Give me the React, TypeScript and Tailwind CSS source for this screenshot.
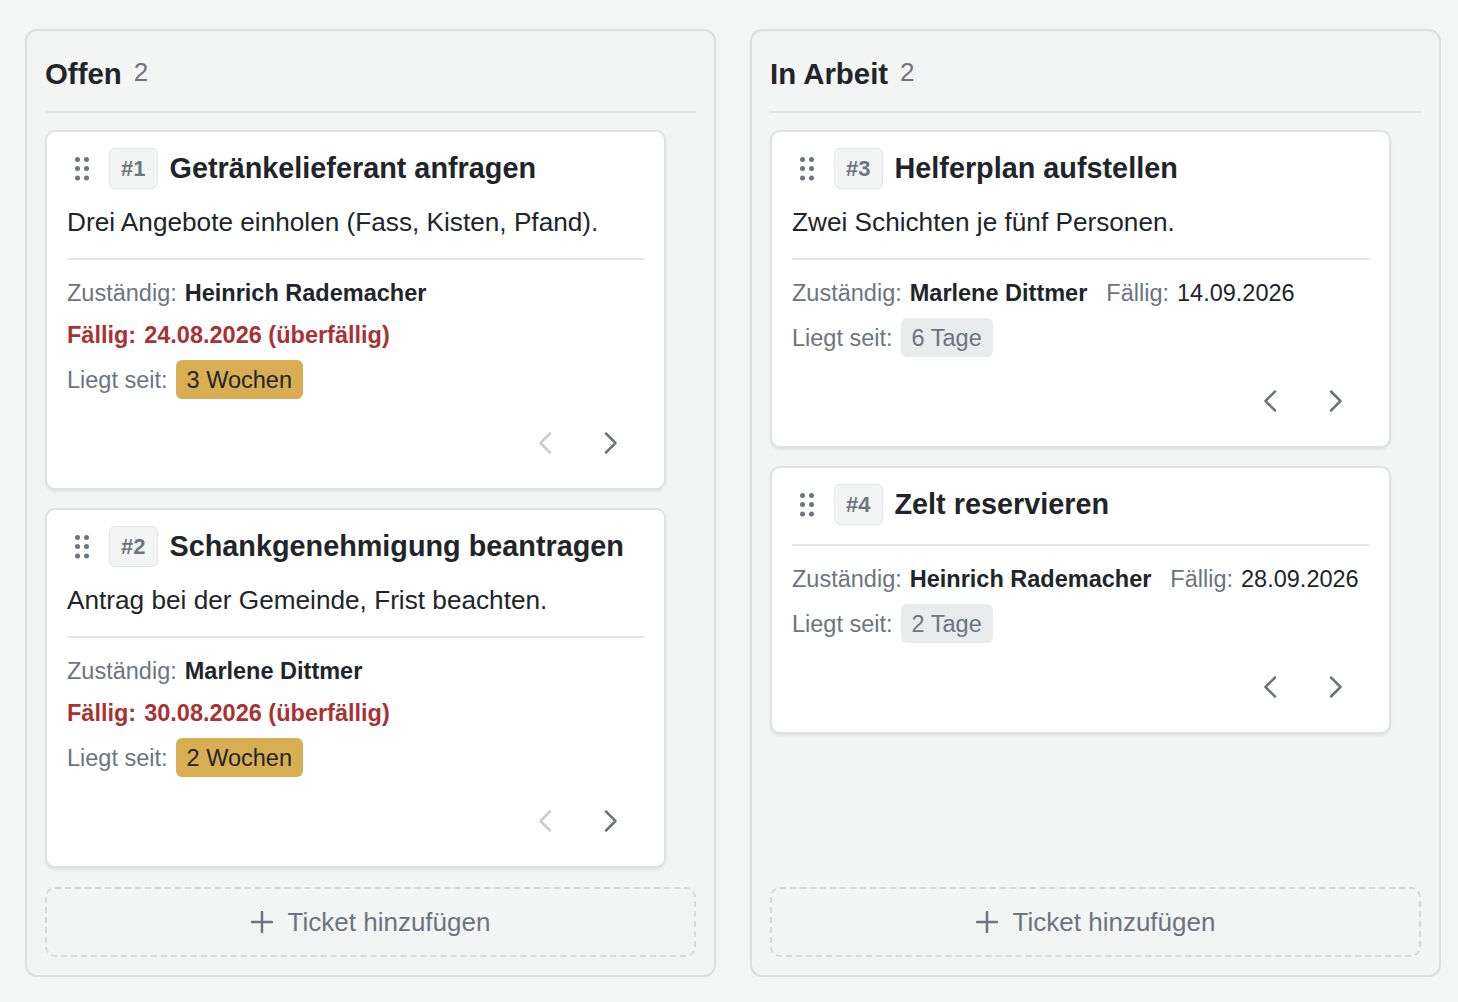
import React from "react";

type Ticket = {
  id: number;
  title: string;
  desc?: string;
  owner: string;
  due: string;
  overdue?: boolean;
  since: string;
  sinceWarn?: boolean;
  inline?: boolean;
  prevDisabled?: boolean;
};

const cols: { name: string; tickets: Ticket[] }[] = [
  {
    name: "Offen",
    tickets: [
      {
        id: 1,
        title: "Getränkelieferant anfragen",
        desc: "Drei Angebote einholen (Fass, Kisten, Pfand).",
        owner: "Heinrich Rademacher",
        due: "24.08.2026",
        overdue: true,
        since: "3 Wochen",
        sinceWarn: true,
        prevDisabled: true,
      },
      {
        id: 2,
        title: "Schankgenehmigung beantragen",
        desc: "Antrag bei der Gemeinde, Frist beachten.",
        owner: "Marlene Dittmer",
        due: "30.08.2026",
        overdue: true,
        since: "2 Wochen",
        sinceWarn: true,
        prevDisabled: true,
      },
    ],
  },
  {
    name: "In Arbeit",
    tickets: [
      {
        id: 3,
        title: "Helferplan aufstellen",
        desc: "Zwei Schichten je fünf Personen.",
        owner: "Marlene Dittmer",
        due: "14.09.2026",
        since: "6 Tage",
        inline: true,
      },
      {
        id: 4,
        title: "Zelt reservieren",
        owner: "Heinrich Rademacher",
        due: "28.09.2026",
        since: "2 Tage",
        inline: true,
      },
    ],
  },
];

function Grip() {
  return (
    <svg width="14" height="24" viewBox="0 0 14 24" fill="#6c757d">
      <circle cx="2.5" cy="2.6" r="2.5" />
      <circle cx="11.5" cy="2.6" r="2.5" />
      <circle cx="2.5" cy="11.6" r="2.5" />
      <circle cx="11.5" cy="11.6" r="2.5" />
      <circle cx="2.5" cy="21" r="2.5" />
      <circle cx="11.5" cy="21" r="2.5" />
    </svg>
  );
}

function Chevron({ dir, color }: { dir: "l" | "r"; color: string }) {
  return (
    <svg width="16" height="24" viewBox="0 0 16 24" fill="none" stroke={color} strokeWidth="2.5" strokeLinecap="round" strokeLinejoin="round">
      {dir === "r" ? <path d="M3 2.5l9.5 9.5-9.5 9.5" /> : <path d="M13 2.5l-9.5 9.5 9.5 9.5" />}
    </svg>
  );
}

function Plus() {
  return (
    <svg width="22" height="22" viewBox="0 0 22 22" fill="none" stroke="#6c757d" strokeWidth="2.5" strokeLinecap="round">
      <path d="M11 1v20M1 11h20" />
    </svg>
  );
}

function Card({ t }: { t: Ticket }) {
  return (
    <div className="bg-white border-2 border-[#dfe2e2] rounded-[10px] shadow-[0_2px_3px_rgba(0,0,0,0.07)] px-[20px] pt-[16px] pb-[21px]">
      <div className="flex items-center gap-[12px]">
        <div className="px-[8px] flex items-center">
          <Grip />
        </div>
        <div className="h-[41px] px-[11px] flex items-center rounded-[6px] bg-[#f3f4f4] border-[1.5px] border-[#e2e5e5] text-[22px] font-bold text-[#6c757d]">
          #{t.id}
        </div>
        <div className="text-[28.8px] font-bold text-[#212529] leading-[41px]">{t.title}</div>
      </div>
      {t.desc && (
        <div className="mt-[14px] text-[26.2px] leading-[39px] text-[#212529]">{t.desc}</div>
      )}
      <div
        className={
          (t.desc ? "mt-[16px] " : "mt-[19px] ") +
          "border-t-2 border-[#e4e6e6] pt-[16px] flex flex-col gap-[8px] text-[23.5px] leading-[34px]"
        }
      >
        {t.inline ? (
          <div className="flex items-center">
            <span className="text-[#6c757d]">Zuständig:</span>
            <span className="ml-[8px] font-bold text-[#212529]">{t.owner}</span>
            <span className="ml-[19px] text-[#6c757d]">Fällig:</span>
            <span className="ml-[8px] text-[#212529]">{t.due}</span>
          </div>
        ) : (
          <>
            <div className="flex items-center">
              <span className="text-[#6c757d]">Zuständig:</span>
              <span className="ml-[8px] font-bold text-[#212529]">{t.owner}</span>
            </div>
            <div className="flex items-center font-bold text-[#a83232]">
              <span>Fällig:</span>
              <span className="ml-[8px]">{t.due} (überfällig)</span>
            </div>
          </>
        )}
        <div className="flex items-center">
          <span className="text-[#6c757d]">Liegt seit:</span>
          <span
            className={
              t.sinceWarn
                ? "ml-[8px] h-[39px] px-[11px] flex items-center rounded-[6px] bg-[#d9ae52] text-[#212529]"
                : "ml-[8px] h-[39px] px-[11px] flex items-center rounded-[6px] bg-[#e9ecec] text-[#6c757d]"
            }
          >
            {t.since}
          </span>
        </div>
      </div>
      <div className="mt-[20px] flex justify-end">
        <button className="w-[66px] h-[48px] flex items-center justify-center">
          <Chevron dir="l" color={t.prevDisabled ? "#c9cdcd" : "#6c757d"} />
        </button>
        <button className="w-[66px] h-[48px] flex items-center justify-center">
          <Chevron dir="r" color="#6c757d" />
        </button>
      </div>
    </div>
  );
}

export default function App() {
  return (
    <div
      className="min-h-[1002px] w-full bg-[#f4f5f5] pt-[29px] pl-[25px] pr-[17px] flex gap-[34px]"
      style={{ fontFamily: '"Liberation Sans", Arial, sans-serif' }}
    >
      {cols.map((c) => (
        <div
          key={c.name}
          className="flex-1 h-[948px] border-2 border-[#dcdfdf] rounded-[12px] bg-[#f3f4f4] px-[18px] pt-[18px] pb-[18px] flex flex-col"
        >
          <div className="h-[64px] pb-[15px] border-b-2 border-[#e2e5e5] flex items-baseline gap-[12px]">
            <span className="text-[29.4px] font-bold text-[#212529] leading-[49px]">{c.name}</span>
            <span className="relative -top-[3px] text-[26px] text-[#6c757d]">{c.tickets.length}</span>
          </div>
          <div className="flex-1 mt-[17px] mr-[30px] flex flex-col gap-[18px]">
            {c.tickets.map((t) => (
              <Card key={t.id} t={t} />
            ))}
          </div>
          <button className="mt-[18px] h-[70px] shrink-0 w-full border-2 border-dashed border-[#d8dbdb] rounded-[10px] flex items-center justify-center gap-[15px] text-[26px] text-[#6c757d]">
            <Plus />
            <span>Ticket hinzufügen</span>
          </button>
        </div>
      ))}
    </div>
  );
}
